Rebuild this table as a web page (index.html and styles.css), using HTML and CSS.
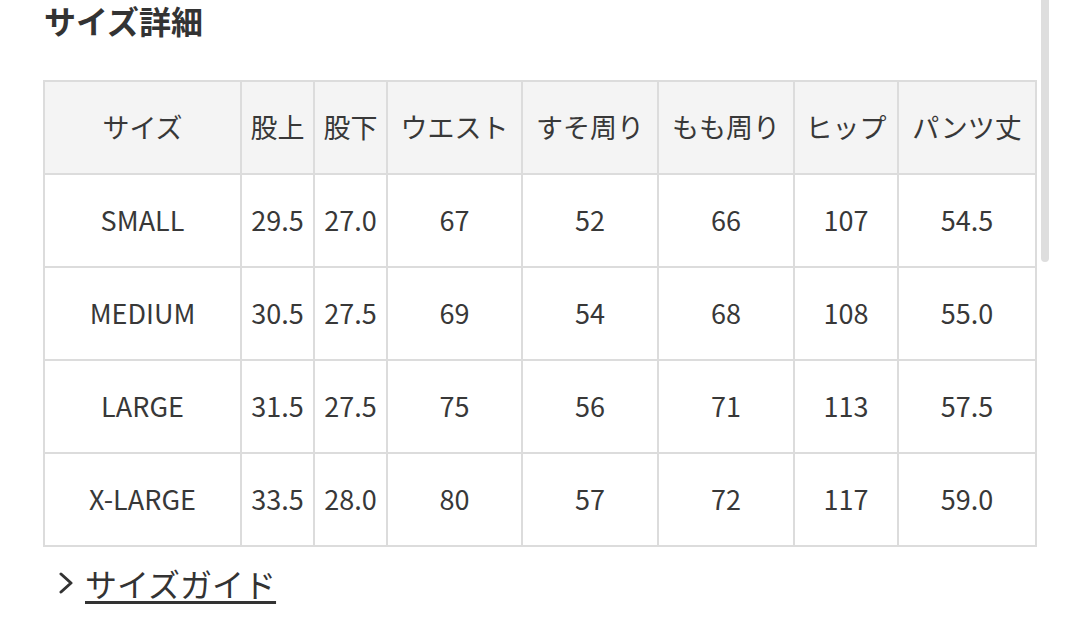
FILE: index.html
```html
<!DOCTYPE html>
<html lang="ja">
<head>
<meta charset="utf-8">
<link rel="stylesheet" href="styles.css">
</head>
<body>
<div class="page">
  <h2 class="title">サイズ詳細</h2>
  <table class="size-table">
    <colgroup>
      <col class="c-size"><col class="c-a"><col class="c-b"><col class="c-c"><col class="c-d"><col class="c-e"><col class="c-f"><col class="c-g">
    </colgroup>
    <thead>
      <tr><th>サイズ</th><th>股上</th><th>股下</th><th>ウエスト</th><th>すそ周り</th><th>もも周り</th><th>ヒップ</th><th>パンツ丈</th></tr>
    </thead>
    <tbody>
      <tr><td>SMALL</td><td>29.5</td><td>27.0</td><td>67</td><td>52</td><td>66</td><td>107</td><td>54.5</td></tr>
      <tr><td>MEDIUM</td><td>30.5</td><td>27.5</td><td>69</td><td>54</td><td>68</td><td>108</td><td>55.0</td></tr>
      <tr><td>LARGE</td><td>31.5</td><td>27.5</td><td>75</td><td>56</td><td>71</td><td>113</td><td>57.5</td></tr>
      <tr><td>X-LARGE</td><td>33.5</td><td>28.0</td><td>80</td><td>57</td><td>72</td><td>117</td><td>59.0</td></tr>
    </tbody>
  </table>
  <div class="guide">
    <svg class="chev" width="16" height="22" viewBox="0 0 16 22"><polyline points="3,2 13,11 3,20" fill="none" stroke="#333" stroke-width="3" stroke-linecap="round" stroke-linejoin="round"/></svg>
    <a class="guide-link" href="#">サイズガイド</a>
  </div>
</div>
<div class="scrollbar"></div>
</body>
</html>
```

FILE: styles.css
```css
html, body {
  margin: 0;
  padding: 0;
  background: #fff;
}
body {
  font-family: "Noto Sans CJK JP", "Noto Sans", sans-serif;
  color: #383838;
  width: 1080px;
  height: 621px;
  overflow: hidden;
  position: relative;
}
.page {
  padding-left: 43px;
  padding-top: 2px;
}
.title {
  margin: 0;
  font-size: 32px;
  font-weight: 700;
  line-height: 36px;
  height: 36px;
  padding-left: 1px;
  color: #333;
}
.size-table {
  margin-top: 42px;
  border-collapse: collapse;
  table-layout: fixed;
  width: 992px;
  font-size: 27px;
}
.c-size { width: 197px; }
.c-a { width: 73px; }
.c-b { width: 73px; }
.c-c { width: 135px; }
.c-d { width: 136px; }
.c-e { width: 136px; }
.c-f { width: 104px; }
.c-g { width: 138px; }
.size-table th,
.size-table td {
  border: 2px solid #dcdcdc;
  height: 89px;
  padding: 0 0 2px;
  text-align: center;
  vertical-align: middle;
  font-weight: 400;
  white-space: nowrap;
  line-height: 1;
}
.size-table th {
  background: #f4f4f4;
}
.guide {
  display: flex;
  align-items: center;
  margin-top: 17px;
  padding-left: 15px;
  height: 38px;
}
.chev {
  display: block;
  margin-right: 11px;
}
.guide-link {
  font-size: 32px;
  font-weight: 400;
  color: #333;
  text-decoration: underline;
  text-decoration-thickness: 3px;
  text-underline-offset: 4px;
  line-height: 38px;
}
.scrollbar {
  position: absolute;
  left: 1041px;
  top: 0;
  width: 8px;
  height: 262px;
  background: #dedede;
  border-radius: 0 0 4px 4px;
}
```
